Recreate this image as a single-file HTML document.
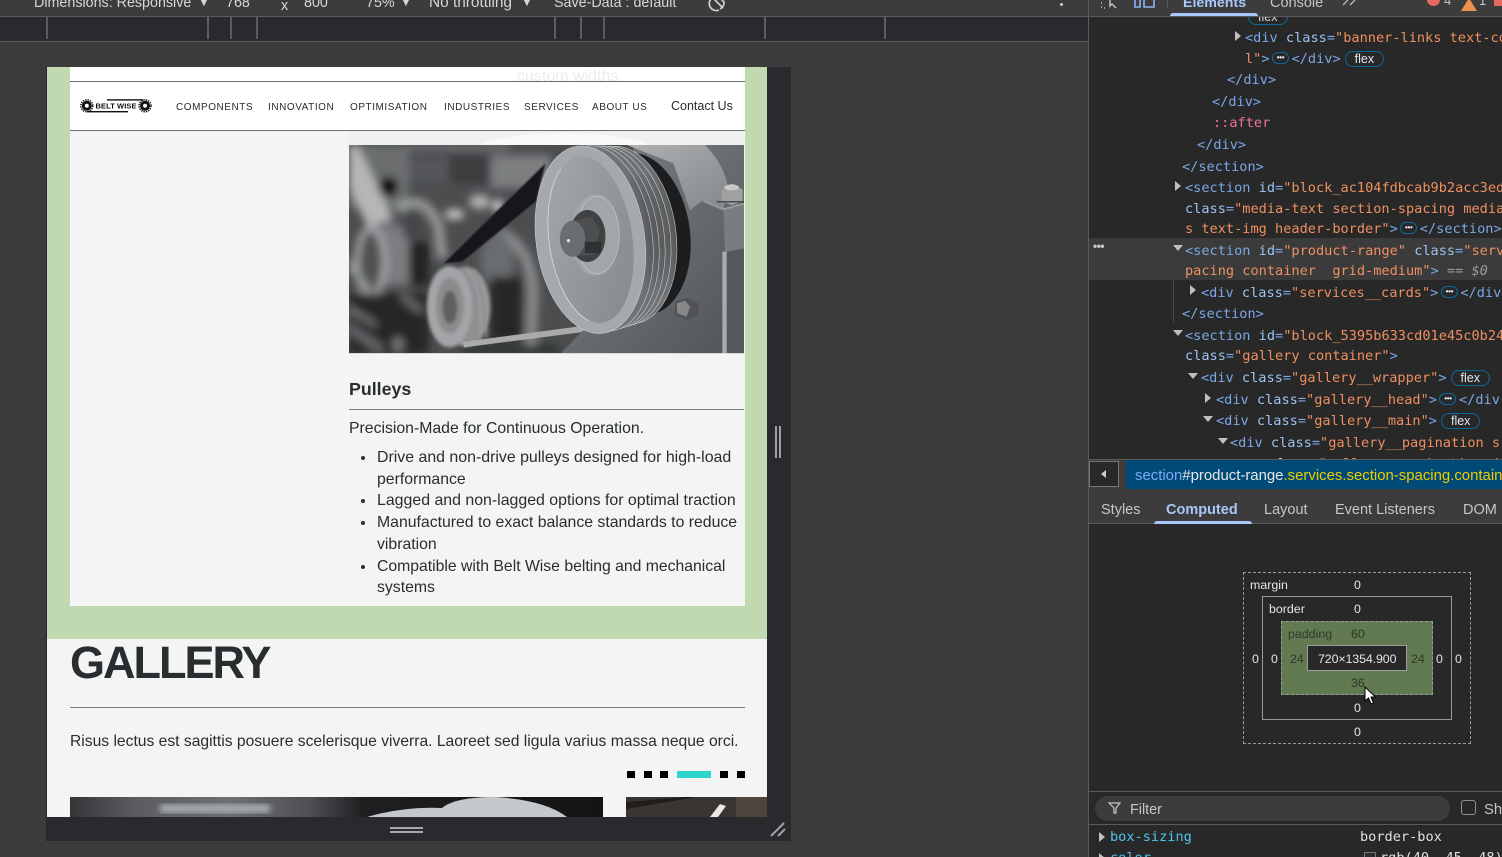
<!DOCTYPE html>
<html><head><meta charset="utf-8"><style>
html,body{margin:0;padding:0;background:#3c3c3c;}
#r{position:relative;width:1502px;height:857px;overflow:hidden;background:#3c3c3c;font-family:"Liberation Sans",sans-serif;}
.a{position:absolute;}
.t{position:absolute;white-space:nowrap;}
.tb{color:#d6d6d6;font-size:14.3px;line-height:18px;}
.tick{position:absolute;top:17px;width:2px;height:22px;background:#5a5b5d;}
.c{position:absolute;white-space:nowrap;font-family:"DejaVu Sans Mono","Liberation Mono",monospace;font-size:13.6px;line-height:18px;color:#7aa7e6;}
.c i{font-style:normal;color:#9cc3f2;}
.c b{font-weight:normal;color:#ee9060;}
.c u{text-decoration:none;color:#f0709f;}
.arr{position:absolute;width:0;height:0;}
.ar{border-left:6px solid #c0c0c0;border-top:5px solid transparent;border-bottom:5px solid transparent;}
.ad{border-top:6px solid #c0c0c0;border-left:5px solid transparent;border-right:5px solid transparent;}
.fx{display:inline-block;border:1px solid #0b6a9c;border-radius:9px;color:#e0e6ee;font-size:12.5px;line-height:14px;padding:0 9px;font-family:"Liberation Sans",sans-serif;margin-left:4px;vertical-align:0;}
.dd{display:inline-block;width:15px;height:10px;border:1px solid #0b6a9c;border-radius:6px;color:#e0e6ee;font-size:8px;line-height:9px;text-align:center;vertical-align:-1px;overflow:hidden;font-family:"Liberation Sans",sans-serif;font-weight:bold;letter-spacing:-.3px;margin:0 2.5px;}
.nav{position:absolute;top:102px;font-size:10px;line-height:12px;letter-spacing:.55px;color:#282d30;white-space:nowrap;}
.li{position:absolute;left:377px;font-size:15.8px;line-height:20px;color:#282d30;white-space:nowrap;}
.bu{position:absolute;left:361px;width:4px;height:4px;border-radius:50%;background:#282d30;}
.bm{position:absolute;white-space:nowrap;font-size:12.4px;line-height:14px;color:#e6e6e6;}
.tab{position:absolute;top:501px;font-size:14.5px;line-height:18px;color:#c4c7c5;white-space:nowrap;font-weight:500;}
</style></head><body><div id="r">

<!-- top toolbar -->
<div class="a" style="left:0;top:0;width:1088px;height:16px;background:#3c3c3c;border-bottom:1px solid #5a5a5a;"></div>
<div class="t tb" style="left:34px;top:-6px;">Dimensions: Responsive</div>
<div class="t tb" style="left:198px;top:-7px;font-size:12px;">▼</div>
<div class="t tb" style="left:226px;top:-6px;">768</div>
<div class="t tb" style="left:281px;top:-3px;">x</div>
<div class="t tb" style="left:304px;top:-6px;">800</div>
<div class="t tb" style="left:366px;top:-6px;">75%</div>
<div class="t tb" style="left:400px;top:-7px;font-size:12px;">▼</div>
<div class="t tb" style="left:429px;top:-6px;font-size:15.4px;">No throttling</div>
<div class="t tb" style="left:521px;top:-7px;font-size:12px;">▼</div>
<div class="t tb" style="left:554px;top:-6px;">Save-Data : default</div>
<svg class="a" style="left:706px;top:0;" width="24" height="12" viewBox="0 0 24 12"><path d="M6 -2 A7 7 0 0 0 13 10 M7 -2 L17 8 M12 -4 L18 2 A7 7 0 0 1 14 9" fill="none" stroke="#d0d0d0" stroke-width="1.7"/></svg>
<div class="a" style="left:1060px;top:3px;width:3px;height:3px;border-radius:50%;background:#d0d0d0;"></div>

<!-- ruler -->
<div class="a" style="left:0;top:17px;width:1088px;height:24px;background:#292a2d;border-bottom:1px solid #5a5a5a;"></div>
<div class="tick" style="left:46px"></div><div class="tick" style="left:207px"></div><div class="tick" style="left:230px"></div><div class="tick" style="left:256px"></div><div class="tick" style="left:554px"></div><div class="tick" style="left:580px"></div><div class="tick" style="left:603px"></div><div class="tick" style="left:764px"></div><div class="tick" style="left:884px"></div>

<!-- device frame -->
<div class="a" style="left:46px;top:67px;width:745px;height:774px;background:#292a2d;"></div>
<div class="a" style="left:775px;top:426px;width:2px;height:32px;background:#a0a0a0;"></div>
<div class="a" style="left:779px;top:426px;width:2px;height:32px;background:#a0a0a0;"></div>
<div class="a" style="left:390px;top:827px;width:33px;height:2px;background:#a8a8a8;"></div>
<div class="a" style="left:390px;top:831px;width:33px;height:2px;background:#a8a8a8;"></div>
<svg class="a" style="left:768px;top:820px;" width="20" height="20"><path d="M3 16 L16 3 M10 16 L17 9" stroke="#a0a0a0" stroke-width="2" fill="none"/></svg>

<!-- page -->
<div class="a" style="left:47px;top:67px;width:720px;height:750px;background:#f4f4f4;overflow:hidden;"></div>
<div class="a" style="left:47px;top:67px;width:720px;height:572px;background:#c1d9b0;"></div>
<div class="a" style="left:70px;top:67px;width:675px;height:539px;background:#f4f4f4;"></div>

<!-- image -->
<svg class="a" style="left:349px;top:131px;" width="395" height="14"><rect width="395" height="14" fill="#f0f0f0"/><ellipse cx="215" cy="20" rx="90" ry="18" fill="#f8f8f8"/></svg>
<svg class="a" style="left:349px;top:145px;" width="395" height="209" viewBox="26 45 1186 627" preserveAspectRatio="none">
<defs>
<filter id="b1" x="-20%" y="-20%" width="140%" height="140%"><feGaussianBlur stdDeviation="13"/></filter>
<filter id="b2" x="-20%" y="-20%" width="140%" height="140%"><feGaussianBlur stdDeviation="5"/></filter>
<filter id="b4" x="-20%" y="-20%" width="140%" height="140%"><feGaussianBlur stdDeviation="2.5"/></filter>
<linearGradient id="hs" x1="0" y1="0" x2="1" y2="1"><stop offset="0" stop-color="#7b7e80"/><stop offset=".5" stop-color="#696c6e"/><stop offset="1" stop-color="#515456"/></linearGradient>
<linearGradient id="arc" x1="0" y1="0" x2="1" y2="1"><stop offset="0" stop-color="#aeb0b2"/><stop offset="1" stop-color="#85888a"/></linearGradient>
<linearGradient id="face" x1="0" y1="0" x2="1" y2="1"><stop offset="0" stop-color="#a6a9ab"/><stop offset=".5" stop-color="#95989a"/><stop offset="1" stop-color="#85888a"/></linearGradient>
<linearGradient id="gr" x1="0" y1="0" x2="1" y2="0"><stop offset="0" stop-color="#777a7c"/><stop offset=".85" stop-color="#6f7274"/><stop offset="1" stop-color="#555759"/></linearGradient>
</defs>
<rect x="26" y="45" width="1186" height="627" fill="#4b4d4f"/>
<g transform="translate(26 45)">
<g filter="url(#b1)">
<rect x="180" y="0" width="300" height="14" fill="#7b7d7f"/>
<rect x="0" y="0" width="180" height="190" fill="#6c6e70"/>
<rect x="300" y="30" width="170" height="85" fill="#3c3e40"/>
<rect x="180" y="40" width="120" height="70" fill="#54565a"/>
<rect x="425" y="30" width="180" height="100" fill="#7c7e80"/>
<polygon points="0,0 25,0 135,225 55,245 0,125" fill="#b4b6b8"/>
<circle cx="118" cy="125" r="30" fill="#050506"/>
<rect x="60" y="240" width="125" height="180" fill="#7b7d80"/>
<ellipse cx="65" cy="350" rx="42" ry="100" fill="#505153" stroke="#b4b6b8" stroke-width="13"/>
<polygon points="0,335 70,440 60,458 0,375" fill="#9a9c9e"/>
<rect x="180" y="290" width="60" height="130" fill="#222324"/>
<path d="M145 195 Q220 135 268 240 L280 340" fill="none" stroke="#9a9c9e" stroke-width="28"/>
<ellipse cx="190" cy="240" rx="32" ry="48" fill="#45474a"/>
<rect x="292" y="195" width="50" height="26" fill="#d2d3d4"/>
<ellipse cx="392" cy="170" rx="32" ry="22" fill="#b0b1b3"/>
<ellipse cx="447" cy="182" rx="15" ry="18" fill="#dedfe0"/>
<rect x="0" y="445" width="240" height="182" fill="#252627"/>
<polygon points="0,480 80,530 85,550 0,505" fill="#6e7072"/>
<polygon points="0,530 110,605 85,625 0,565" fill="#626466"/>
<ellipse cx="147" cy="598" rx="17" ry="22" fill="#77797b"/>
<polygon points="160,440 225,490 215,510 155,465" fill="#666"/>
<path d="M450 260 Q555 310 552 460 L545 627" fill="none" stroke="#8a8c8e" stroke-width="32"/>
<ellipse cx="445" cy="345" rx="50" ry="82" fill="#6b6d6f"/>
<rect x="425" y="395" width="95" height="190" fill="#252627"/>
<rect x="340" y="600" width="290" height="27" fill="#2f3031"/>
</g>
<g filter="url(#b2)">
<ellipse cx="350" cy="485" rx="75" ry="120" fill="#8d8f91"/>
<ellipse cx="302" cy="485" rx="68" ry="122" fill="#a3a5a7"/>
<ellipse cx="303" cy="482" rx="42" ry="84" fill="#8a8c8e"/>
<ellipse cx="303" cy="487" rx="22" ry="50" fill="#5d5f61"/>
<path d="M350 368 Q405 420 395 590 M375 372 Q425 430 412 580" stroke="#a9abad" stroke-width="4" fill="none"/>
</g>
<polygon points="590,55 560,170 340,350 285,355" fill="#17181a" filter="url(#b4)"/>
</g>
<polygon points="366,636 740,586 760,602 372,652" fill="#a8aaac"/>
<!-- housing -->
<polygon points="880,45 1212,45 1212,672 660,672 740,590 880,400" fill="url(#hs)"/>
<polygon points="1150,235 1212,218 1212,360 1155,368" fill="#7a7d7f"/>
<polygon points="1160,365 1212,355 1212,672 1160,672" fill="#56595b"/>
<path d="M860 45 L1095 45 Q1155 105 1165 180 L1150 235 L1090 210 L1050 240 L1000 100Z" fill="url(#arc)"/>
<polygon points="1090,210 1150,235 1212,218 1212,223 1150,241 1088,215" fill="#9a9c9e"/>
<rect x="1147" y="365" width="13" height="305" fill="#a9abad"/>
<!-- big pulley -->
<g transform="rotate(-8 800 320)">
<ellipse cx="895" cy="325" rx="155" ry="245" fill="#1c1d1e"/>
<g fill="url(#gr)" stroke="#d4d6d7" stroke-width="1.6">
<ellipse cx="850" cy="322" rx="158" ry="268"/>
<ellipse cx="832" cy="322" rx="158" ry="271"/>
<ellipse cx="814" cy="322" rx="158" ry="274"/>
<ellipse cx="796" cy="322" rx="158" ry="277"/>
<ellipse cx="778" cy="322" rx="158" ry="280"/>
</g>
<ellipse cx="750" cy="322" rx="163" ry="283" fill="#a6a9ab" stroke="#c8cacb" stroke-width="2"/>
<ellipse cx="752" cy="322" rx="124" ry="252" fill="url(#face)"/>
<ellipse cx="752" cy="322" rx="126" ry="254" fill="none" stroke="#dfe0e1" stroke-width="2" stroke-dasharray="500 1000" stroke-dashoffset="-350"/>
</g>
<ellipse cx="765" cy="315" rx="74" ry="122" fill="#a3a6a8"/>
<ellipse cx="772" cy="315" rx="65" ry="116" fill="none" stroke="#c4c6c7" stroke-width="2"/>
<ellipse cx="742" cy="318" rx="54" ry="78" fill="#3f4143"/>
<polygon points="695,272 755,262 780,300 760,375 695,380" fill="#4c4e50"/>
<ellipse cx="697" cy="326" rx="38" ry="54" fill="#6b6e70"/>
<circle cx="685" cy="332" r="5" fill="#e2e2e2"/>
<rect x="735" y="335" width="48" height="34" fill="#303132"/>
<!-- bolts -->
<polygon points="1145,180 1175,160 1208,178 1208,215 1175,225 1145,215" fill="#9fa1a3"/>
<ellipse cx="1175" cy="172" rx="22" ry="9" fill="#c8c9ca"/>
<rect x="1130" y="214" width="82" height="3" fill="#1f2021"/>
<polygon points="1005,515 1040,505 1075,520 1075,555 1040,570 1005,555" fill="#505254"/>
<polygon points="1010,520 1035,512 1050,530 1040,560 1012,550" fill="#86888a"/>
</svg>

<div class="a" style="left:349px;top:353px;width:395px;height:1px;background:#d8d8d8;"></div>

<!-- header -->
<div class="a" style="left:70px;top:67px;width:675px;height:63px;background:#fff;"></div>
<div class="t" style="left:517px;top:68px;font-size:16px;line-height:18px;color:#ececec;">custom widths</div>
<div class="a" style="left:70px;top:81px;width:675px;height:1px;background:#6a6d6e;"></div>
<div class="a" style="left:70px;top:130px;width:675px;height:1px;background:#6a6d6e;"></div>

<!-- logo -->
<svg class="a" style="left:80px;top:97px;" width="72" height="20" viewBox="0 0 72 20">
<rect x="7" y="14" width="41" height="1.4" fill="#111"/><rect x="27" y="2.2" width="36" height="1.4" fill="#111"/>
<circle cx="6.8" cy="8.8" r="5" fill="#111"/><circle cx="6.8" cy="8.8" r="6" fill="none" stroke="#111" stroke-width="1.4" stroke-dasharray="1.4 1"/><circle cx="6.8" cy="8.8" r="2" fill="#fff"/>
<circle cx="65" cy="8.8" r="5" fill="#111"/><circle cx="65" cy="8.8" r="6" fill="none" stroke="#111" stroke-width="1.4" stroke-dasharray="1.4 1"/><circle cx="65" cy="8.8" r="2" fill="#fff"/>
<text x="15.5" y="11.4" font-family="Liberation Sans" font-size="7.5" font-weight="bold" fill="#111" textLength="41">BELT WISE</text>
</svg>

<!-- nav -->
<div class="nav" style="left:176px;">COMPONENTS</div>
<div class="nav" style="left:268px;">INNOVATION</div>
<div class="nav" style="left:350px;">OPTIMISATION</div>
<div class="nav" style="left:444px;">INDUSTRIES</div>
<div class="nav" style="left:524px;">SERVICES</div>
<div class="nav" style="left:592px;">ABOUT US</div>
<div class="t" style="left:671px;top:98px;font-size:12.5px;line-height:16px;color:#282d30;">Contact Us</div>

<!-- pulley text -->
<div class="t" style="left:349px;top:378px;font-size:17.8px;line-height:22px;font-weight:bold;color:#282d30;">Pulleys</div>
<div class="a" style="left:349px;top:409px;width:395px;height:1px;background:#7a7d7f;"></div>
<div class="t" style="left:349px;top:419px;font-size:15.8px;line-height:20px;color:#282d30;">Precision-Made for Continuous Operation.</div>
<div class="bu" style="top:456px;"></div><div class="li" style="top:448px;font-size:15.9px;">Drive and non-drive pulleys designed for high-load</div>
<div class="li" style="top:470px;">performance</div>
<div class="bu" style="top:499px;"></div><div class="li" style="top:491px;font-size:15.9px;">Lagged and non-lagged options for optimal traction</div>
<div class="bu" style="top:521px;"></div><div class="li" style="top:513px;">Manufactured to exact balance standards to reduce</div>
<div class="li" style="top:535px;">vibration</div>
<div class="bu" style="top:565px;"></div><div class="li" style="top:557px;font-size:15.75px;">Compatible with Belt Wise belting and mechanical</div>
<div class="li" style="top:578px;">systems</div>

<!-- gallery -->
<div class="t" style="left:70px;top:636px;font-size:45px;line-height:54px;font-weight:bold;color:#282d30;letter-spacing:-2px;">GALLERY</div>
<div class="a" style="left:70px;top:707px;width:675px;height:1px;background:#7a7d7f;"></div>
<div class="t" style="left:70px;top:732px;font-size:15.65px;line-height:20px;color:#282d30;">Risus lectus est sagittis posuere scelerisque viverra. Laoreet sed ligula varius massa neque orci.</div>
<div class="a" style="left:627px;top:771px;width:8px;height:7px;background:#000;"></div>
<div class="a" style="left:644px;top:771px;width:8px;height:7px;background:#000;"></div>
<div class="a" style="left:660px;top:771px;width:8px;height:7px;background:#000;"></div>
<div class="a" style="left:677px;top:771px;width:34px;height:7px;background:#2dd6cc;"></div>
<div class="a" style="left:720px;top:771px;width:8px;height:7px;background:#000;"></div>
<div class="a" style="left:737px;top:771px;width:8px;height:7px;background:#000;"></div>
<svg class="a" style="left:70px;top:797px;" width="533" height="20" viewBox="0 0 533 20">
<defs><linearGradient id="gb" x1="0" x2="1" y1="0" y2="0"><stop offset="0" stop-color="#323436"/><stop offset=".12" stop-color="#5a5c5f"/><stop offset=".3" stop-color="#6d6f72"/><stop offset=".45" stop-color="#4d4f52"/><stop offset=".55" stop-color="#1e1f21"/><stop offset="1" stop-color="#131416"/></linearGradient><filter id="b3"><feGaussianBlur stdDeviation="3"/></filter></defs>
<rect width="533" height="20" fill="url(#gb)"/>
<rect x="90" y="7" width="110" height="9" fill="#a6a9ad" filter="url(#b3)"/>
<path d="M297 20 Q335 9 372 11 Q385 0 425 0 Q475 3 497 20Z" fill="#c4c7cb"/>
</svg>
<svg class="a" style="left:626px;top:797px;" width="141" height="20" viewBox="0 0 141 20">
<rect width="141" height="20" fill="#3a3530"/>
<polygon points="0,5 60,0 70,0 0,12" fill="#1f1c1a"/>
<polygon points="84,20 94,7 100,9 92,20" fill="#e8e8e4"/>
<rect x="110" width="31" height="20" fill="#4e463c"/>
</svg>

<!-- devtools panel -->
<div class="a" style="left:1088px;top:0;width:414px;height:857px;background:#282828;border-left:1px solid #5a5a5a;box-sizing:border-box;"></div>

<!-- selected row -->
<div class="a" style="left:1089px;top:238px;width:413px;height:42px;background:#3b3b3b;"></div>
<div class="a" style="left:1173px;top:280px;width:1px;height:42px;background:#4a4a4a;"></div>
<div class="t" style="left:1093px;top:241px;font-size:12px;line-height:10px;color:#c8c8c8;font-weight:bold;letter-spacing:-.5px;">•••</div>

<!-- code -->
<div class="a" style="left:1248px;top:8px;width:38px;height:15px;border:1px solid #0b6a9c;border-radius:8px;"></div>
<div class="t" style="left:1258px;top:10px;font-size:12.5px;line-height:14px;color:#d0d4da;">flex</div>
<div class="arr ar" style="left:1235px;top:31px;"></div>
<div class="c" style="left:1245px;top:29px;">&lt;div <i>class</i>=<b>"banner-links text-co</b></div>
<div class="c" style="left:1245px;top:50px;"><b>l"</b>&gt;<span class="dd">•••</span>&lt;/div&gt;<span class="fx">flex</span></div>
<div class="c" style="left:1227px;top:71px;">&lt;/div&gt;</div>
<div class="c" style="left:1212px;top:93px;">&lt;/div&gt;</div>
<div class="c" style="left:1213px;top:114px;"><u>::after</u></div>
<div class="c" style="left:1197px;top:136px;">&lt;/div&gt;</div>
<div class="c" style="left:1182px;top:158px;">&lt;/section&gt;</div>
<div class="arr ar" style="left:1175px;top:181px;"></div>
<div class="c" style="left:1185px;top:179px;">&lt;section <i>id</i>=<b>"block_ac104fdbcab9b2acc3ed</b></div>
<div class="c" style="left:1185px;top:200px;"><i>class</i>=<b>"media-text section-spacing media</b></div>
<div class="c" style="left:1185px;top:220px;"><b>s text-img header-border"</b>&gt;<span class="dd">•••</span>&lt;/section&gt;</div>
<div class="arr ad" style="left:1173px;top:245px;"></div>
<div class="c" style="left:1185px;top:242px;">&lt;section <i>id</i>=<b>"product-range"</b> <i>class</i>=<b>"serv</b></div>
<div class="c" style="left:1185px;top:262px;"><b>pacing container&nbsp; grid-medium"</b>&gt; <span style="color:#9a9a9a">== <em>$0</em></span></div>
<div class="arr ar" style="left:1190px;top:285px;"></div>
<div class="c" style="left:1201px;top:284px;">&lt;div <i>class</i>=<b>"services__cards"</b>&gt;<span class="dd">•••</span>&lt;/div</div>
<div class="c" style="left:1182px;top:305px;">&lt;/section&gt;</div>
<div class="arr ad" style="left:1173px;top:330px;"></div>
<div class="c" style="left:1185px;top:327px;">&lt;section <i>id</i>=<b>"block_5395b633cd01e45c0b24</b></div>
<div class="c" style="left:1185px;top:347px;"><i>class</i>=<b>"gallery container"</b>&gt;</div>
<div class="arr ad" style="left:1188px;top:373px;"></div>
<div class="c" style="left:1201px;top:369px;">&lt;div <i>class</i>=<b>"gallery__wrapper"</b>&gt;<span class="fx">flex</span></div>
<div class="arr ar" style="left:1205px;top:393px;"></div>
<div class="c" style="left:1216px;top:391px;">&lt;div <i>class</i>=<b>"gallery__head"</b>&gt;<span class="dd">•••</span>&lt;/div</div>
<div class="arr ad" style="left:1203px;top:416px;"></div>
<div class="c" style="left:1216px;top:412px;">&lt;div <i>class</i>=<b>"gallery__main"</b>&gt;<span class="fx">flex</span></div>
<div class="arr ad" style="left:1218px;top:438px;"></div>
<div class="c" style="left:1230px;top:434px;">&lt;div <i>class</i>=<b>"gallery__pagination s</b></div>
<div class="c" style="left:1245px;top:455px;">&lt;a <i>class</i>=<b>"gallery__pagination-d</b></div>

<!-- devtools top bar -->
<div class="a" style="left:1089px;top:0;width:413px;height:16px;background:#3c3c3c;border-bottom:1px solid #5a5a5a;"></div>
<svg class="a" style="left:1098px;top:0;" width="60" height="10" viewBox="0 0 60 10"><path d="M3 7h1M3 3h1M6 8h1M12 -2 L12 6 L14 4 L18 8" stroke="#c0c0c0" stroke-width="1.5" fill="none"/><path d="M37 -2v9h5v-9M46 -2v9h10v-9" stroke="#8ab4f8" stroke-width="1.6" fill="none"/></svg>
<div class="a" style="left:1167px;top:0;width:1px;height:8px;background:#555;"></div>
<div class="t" style="left:1183px;top:-6px;font-size:14.2px;line-height:18px;color:#a8c7fa;font-weight:bold;">Elements</div>
<div class="a" style="left:1170px;top:13px;width:88px;height:3px;background:#a8c7fa;border-radius:3px 3px 0 0;"></div>
<div class="t" style="left:1270px;top:-6px;font-size:14.5px;line-height:18px;color:#c4c7c5;">Console</div>
<svg class="a" style="left:1342px;top:0;" width="16" height="8"><path d="M1 5 L6 0 M8 5 L13 0" stroke="#b0b0b0" stroke-width="1.5" fill="none"/></svg>
<div class="a" style="left:1427px;top:-7px;width:13px;height:13px;border-radius:50%;background:#e46962;"></div>
<div class="t" style="left:1444px;top:-7px;font-size:13px;line-height:16px;color:#c4c7c5;">4</div>
<div class="arr" style="left:1461px;top:-2px;border-bottom:13px solid #ee8f50;border-left:8px solid transparent;border-right:8px solid transparent;"></div>
<div class="t" style="left:1479px;top:-7px;font-size:13px;line-height:16px;color:#c4c7c5;">1</div>
<div class="a" style="left:1494px;top:-2px;width:8px;height:8px;background:#e46962;"></div>

<!-- breadcrumbs -->
<div class="a" style="left:1089px;top:459px;width:413px;height:31px;background:#3c3c3c;border-top:1px solid #5a5a5a;box-sizing:border-box;"></div>
<div class="a" style="left:1089px;top:461px;width:30px;height:26px;border:1px solid #777;box-sizing:border-box;background:#282828;"></div>
<div class="arr" style="left:1101px;top:470px;border-right:5px solid #d0d0d0;border-top:4px solid transparent;border-bottom:4px solid transparent;"></div>
<div class="a" style="left:1126px;top:460px;width:376px;height:29px;background:#004a77;"></div>
<div class="t" style="left:1135px;top:467px;font-size:14.93px;line-height:18px;color:#e8e8e8;"><span style="color:#7cacf8">section</span>#product-range<span style="color:#f0cc00">.services.section-spacing.contain</span></div>

<!-- sub tabs -->
<div class="a" style="left:1089px;top:490px;width:413px;height:33px;background:#3c3c3c;border-bottom:1px solid #5a5a5a;"></div>
<div class="tab" style="left:1101px;">Styles</div>
<div class="tab" style="left:1166px;color:#a8c7fa;font-weight:bold;">Computed</div>
<div class="a" style="left:1154px;top:521px;width:98px;height:3px;background:#a8c7fa;border-radius:3px 3px 0 0;"></div>
<div class="tab" style="left:1264px;">Layout</div>
<div class="tab" style="left:1335px;">Event Listeners</div>
<div class="tab" style="left:1463px;">DOM Breakpoints</div>

<!-- box model -->
<div class="a" style="left:1243px;top:572px;width:228px;height:172px;border:1px dashed #9a9a9a;box-sizing:border-box;"></div>
<div class="a" style="left:1262px;top:596px;width:190px;height:124px;border:1px solid #9a9a9a;box-sizing:border-box;"></div>
<div class="a" style="left:1281px;top:621px;width:152px;height:74px;background:#617a52;border:1px dashed #9a9a9a;box-sizing:border-box;"></div>
<div class="a" style="left:1307px;top:645px;width:100px;height:26px;background:#282828;border:1px solid #9a9a9a;box-sizing:border-box;"></div>
<div class="bm" style="left:1250px;top:578px;">margin</div>
<div class="bm" style="left:1354px;top:578px;">0</div>
<div class="bm" style="left:1269px;top:602px;">border</div>
<div class="bm" style="left:1354px;top:602px;">0</div>
<div class="bm" style="left:1288px;top:627px;color:#2c3a26;">padding</div>
<div class="bm" style="left:1351px;top:627px;color:#2c3a26;">60</div>
<div class="bm" style="left:1252px;top:652px;">0</div>
<div class="bm" style="left:1271px;top:652px;">0</div>
<div class="bm" style="left:1290px;top:652px;color:#2c3a26;">24</div>
<div class="bm" style="left:1318px;top:652px;letter-spacing:-.1px;">720×1354.900</div>
<div class="bm" style="left:1411px;top:652px;color:#2c3a26;">24</div>
<div class="bm" style="left:1436px;top:652px;">0</div>
<div class="bm" style="left:1455px;top:652px;">0</div>
<div class="bm" style="left:1351px;top:676px;color:#2c3a26;">36</div>
<div class="bm" style="left:1354px;top:701px;">0</div>
<div class="bm" style="left:1354px;top:725px;">0</div>
<svg class="a" style="left:1364px;top:686px;" width="14" height="21" viewBox="0 0 14 21"><path d="M1 1 L1 15 L4.5 12 L7 18 L9.5 17 L7 11 L11.5 11Z" fill="#fff" stroke="#000" stroke-width="1"/></svg>

<!-- filter -->
<div class="a" style="left:1089px;top:791px;width:413px;height:1px;background:#5a5a5a;"></div>
<div class="a" style="left:1095px;top:796px;width:355px;height:25px;border-radius:13px;background:#3c3c3c;"></div>
<svg class="a" style="left:1108px;top:802px;" width="14" height="13" viewBox="0 0 14 13"><path d="M1 1 H12 L8 6 V11 H6 V6Z" fill="none" stroke="#c8c8c8" stroke-width="1.2"/></svg>
<div class="t" style="left:1130px;top:801px;font-size:14.4px;line-height:18px;color:#c4c7c5;">Filter</div>
<div class="a" style="left:1461px;top:800px;width:15px;height:15px;border:1px solid #8e918f;border-radius:3px;box-sizing:border-box;"></div>
<div class="t" style="left:1484px;top:801px;font-size:14.8px;line-height:18px;color:#c4c7c5;">Show all</div>
<div class="a" style="left:1089px;top:824px;width:413px;height:1px;background:#5a5a5a;"></div>

<!-- computed -->
<div class="arr ar" style="left:1099px;top:832px;"></div>
<div class="c" style="left:1110px;top:828px;color:#4fc3f0;">box-sizing</div>
<div class="c" style="left:1360px;top:828px;color:#e0e0e0;">border-box</div>
<div class="arr ar" style="left:1099px;top:853px;"></div>
<div class="c" style="left:1110px;top:849px;color:#4fc3f0;">color</div>
<div class="a" style="left:1364px;top:852px;width:12px;height:12px;background:#282d30;border:1px solid #777;box-sizing:border-box;"></div>
<div class="c" style="left:1380px;top:849px;color:#e0e0e0;">rgb(40, 45, 48)</div>

</div></body></html>
